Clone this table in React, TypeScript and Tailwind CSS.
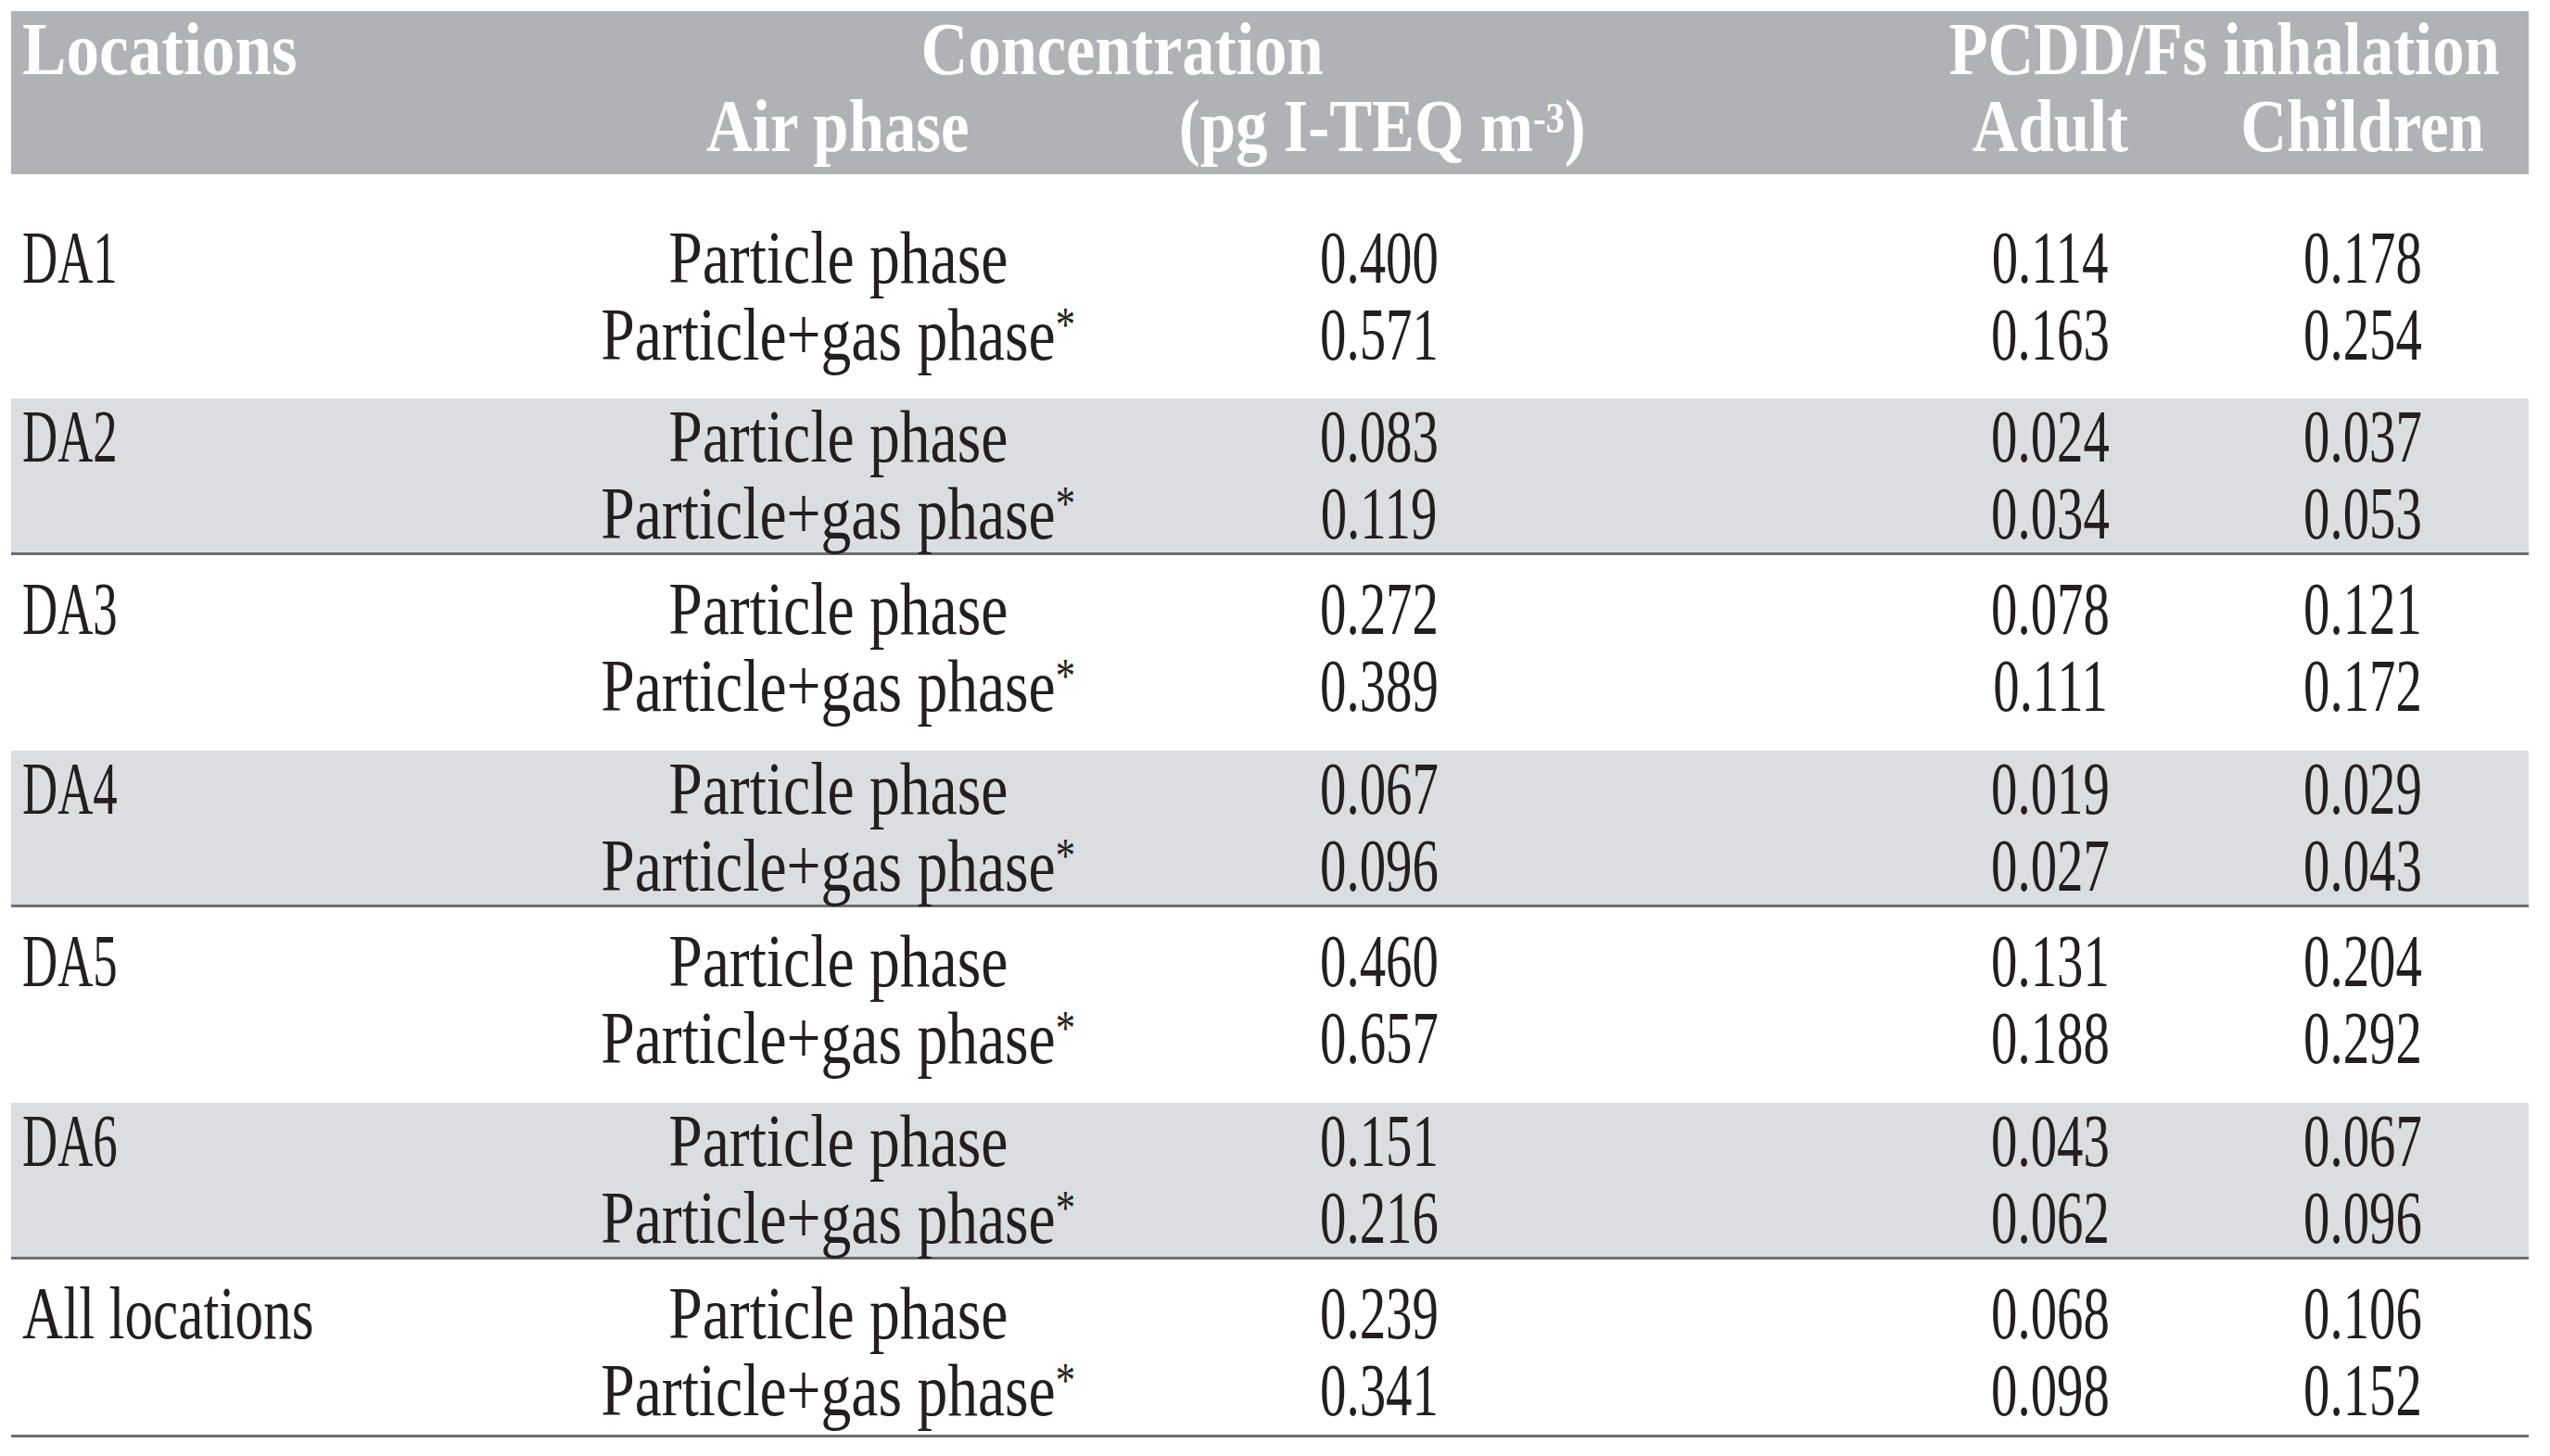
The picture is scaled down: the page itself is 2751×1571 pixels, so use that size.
const cols = "grid grid-cols-[560px_664px_504px_314px_316px_358px]";

type Group = {
  loc: string;
  rows: [string, string, string][];
  kind: "first" | "shaded" | "plain" | "last";
};

const groups: Group[] = [
  { loc: "DA1", kind: "first", rows: [["0.400", "0.114", "0.178"], ["0.571", "0.163", "0.254"]] },
  { loc: "DA2", kind: "shaded", rows: [["0.083", "0.024", "0.037"], ["0.119", "0.034", "0.053"]] },
  { loc: "DA3", kind: "plain", rows: [["0.272", "0.078", "0.121"], ["0.389", "0.111", "0.172"]] },
  { loc: "DA4", kind: "shaded", rows: [["0.067", "0.019", "0.029"], ["0.096", "0.027", "0.043"]] },
  { loc: "DA5", kind: "plain", rows: [["0.460", "0.131", "0.204"], ["0.657", "0.188", "0.292"]] },
  { loc: "DA6", kind: "shaded", rows: [["0.151", "0.043", "0.067"], ["0.216", "0.062", "0.096"]] },
  { loc: "All locations", kind: "last", rows: [["0.239", "0.068", "0.106"], ["0.341", "0.098", "0.152"]] },
];

const groupClass = {
  first: "pt-[49px] pb-[27px]",
  shaded: "bg-[#dcdde0] border-b-[3px] border-[#6d6e71]",
  plain: "pt-[17px] pb-[28px]",
  last: "pt-[17px] pb-[6px] border-b-[3px] border-[#6d6e71]",
};

const Num = ({ value }: { value: string }) => (
  <div className="text-center">
    <span className="inline-block scale-x-[0.71]">{value}</span>
  </div>
);

const Phase = ({ gas }: { gas?: boolean }) => (
  <div className="text-center whitespace-nowrap">
    <span className="inline-block scale-x-[0.82]">
      {gas ? "Particle+gas phase" : "Particle phase"}
      {gas && <sup className="text-[52px] relative -top-[20px]">*</sup>}
    </span>
  </div>
);

const HeadText = ({ children }: { children: React.ReactNode }) => (
  <span className="inline-block scale-x-[0.86] whitespace-nowrap">{children}</span>
);

export default function App() {
  return (
    <div className="min-h-screen bg-white font-['Liberation_Serif',serif] text-[80px] text-[#231f20]">
      <div className="ml-[12px] pt-[12px] w-[2716px]">
        {/* header */}
        <div className={`${cols} bg-[#b1b2b5] text-white font-bold leading-[83px] pb-[10px]`}>
          <div className="pl-[12px]">
            <span className="inline-block origin-left scale-x-[0.89]">Locations</span>
          </div>
          <div className="col-span-2 text-center pl-[110px]">
            <span className="inline-block scale-x-[0.88] whitespace-nowrap">Concentration</span>
          </div>
          <div />
          <div className="col-span-2 text-center pr-[18px]">
            <HeadText>PCDD/Fs inhalation</HeadText>
          </div>
          <div />
          <div className="text-center">
            <HeadText>Air phase</HeadText>
          </div>
          <div className="text-center">
            <HeadText>
              (pg I-TEQ m<sup className="text-[47px] relative -top-[20px]">-3</sup>)
            </HeadText>
          </div>
          <div />
          <div className="text-center">
            <HeadText>Adult</HeadText>
          </div>
          <div className="text-center">
            <HeadText>Children</HeadText>
          </div>
        </div>

        {groups.map((g) => (
          <div key={g.loc} className={`${cols} leading-[83px] ${groupClass[g.kind]}`}>
            {g.rows.map((r, i) => (
              <div key={i} className="contents">
                <div className="pl-[12px] whitespace-nowrap">
                  {i === 0 && (
                    <span
                      className={
                        g.kind === "last"
                          ? "inline-block origin-left scale-x-[0.765]"
                          : "inline-block origin-left scale-x-[0.66]"
                      }
                    >
                      {g.loc}
                    </span>
                  )}
                </div>
                <Phase gas={i === 1} />
                <Num value={r[0]} />
                <div />
                <Num value={r[1]} />
                <Num value={r[2]} />
              </div>
            ))}
          </div>
        ))}
      </div>
    </div>
  );
}
